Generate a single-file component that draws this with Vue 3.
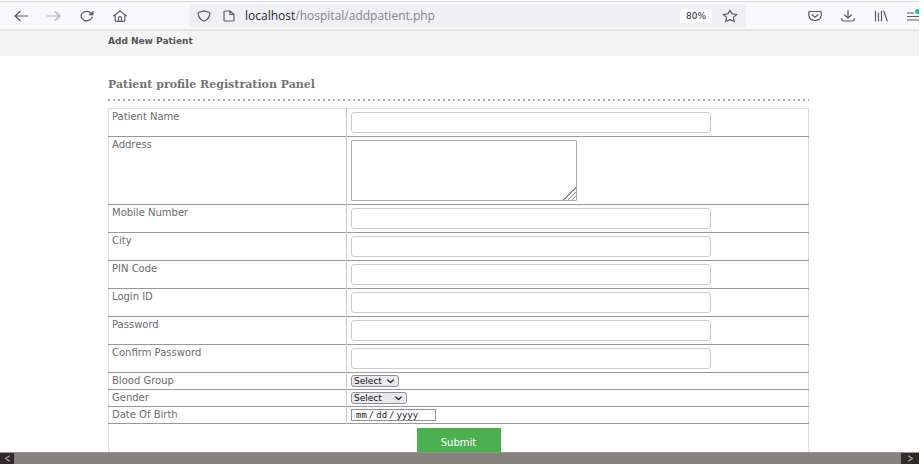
<script setup>
import { ref } from 'vue'

const rows = [
  { id: 'name', label: 'Patient Name', type: 'text' },
  { id: 'address', label: 'Address', type: 'area' },
  { id: 'mobile', label: 'Mobile Number', type: 'text' },
  { id: 'city', label: 'City', type: 'text' },
  { id: 'pin', label: 'PIN Code', type: 'text' },
  { id: 'login', label: 'Login ID', type: 'text' },
  { id: 'password', label: 'Password', type: 'password' },
  { id: 'confirm', label: 'Confirm Password', type: 'password' },
  { id: 'blood', label: 'Blood Group', type: 'select' },
  { id: 'gender', label: 'Gender', type: 'select' },
  { id: 'dob', label: 'Date Of Birth', type: 'date' }
]
const values = ref({})
</script>

<template>
  <div class="window">
    <header class="toolbar">
      <nav class="nav">
        <button class="tool" aria-label="Back">
          <svg width="14" height="12" viewBox="0 0 14 12"><path d="M13.5 6H1M6 1.5L1 6l5 4.5" /></svg>
        </button>
        <button class="tool dim" aria-label="Forward" disabled>
          <svg width="14" height="12" viewBox="0 0 14 12"><path d="M.5 6H13M8 1.500L13 6l-5 4.500" /></svg>
        </button>
        <button class="tool" aria-label="Reload">
          <svg width="14" height="12" viewBox="0 0 14 12"><path d="M11.200 3.300A5.600 4.700 0 1 0 12.200 7" /><path class="solid" d="M13.500.6v4.600H8.300z" /></svg>
        </button>
        <button class="tool" aria-label="Home">
          <svg width="14" height="12" viewBox="0 0 14 12"><path d="M.6 6L7 .9 13.400 6M2.200 5v5.300q0 1 1.100 1h7.400q1.100 0 1.100-1V5M5.500 11V8q0-1.300 1.500-1.300T8.500 8v3" /></svg>
        </button>
      </nav>
      <div class="address">
        <svg width="14" height="12" viewBox="0 0 14 12"><path d="M7 .8L12.800 2.500Q13.200 8.800 7 11.300.8 8.800 1.200 2.500z" /></svg>
        <svg width="12" height="12" viewBox="0 0 12 12"><path d="M2 1h5l4 3.500v5.700q0 .8-1 .8H2q-1 0-1-.8V1.800Q1 1 2 1zM7 1v3.500h4" /></svg>
        <span class="url"><b>localhost</b>/hospital/addpatient.php</span>
        <button class="zoom">80%</button>
        <button class="tool" aria-label="Bookmark this page">
          <svg width="16" height="14" viewBox="0 0 16 14"><path d="M8 1.200l2.100 3.700 4.700.6-3.400 2.900.9 4.100L8 10.600l-4.300 1.900.9-4.100L1.200 5.500l4.700-.6z" /></svg>
        </button>
      </div>
      <div class="actions">
        <button class="tool" aria-label="Save to Pocket">
          <svg width="14" height="12" viewBox="0 0 14 12"><path d="M1.800 1.500h10.400q1 0 1 1V5.300Q12.500 10.300 7 10.500 1.500 10.300.8 5.300V2.500q0-1 1-1zM4 4.800L7 7.200l3-2.400" /></svg>
        </button>
        <button class="tool" aria-label="Downloads">
          <svg width="14" height="12" viewBox="0 0 14 12"><path d="M7 .5v7.500M3.500 5L7 8l3.500-3M.8 8.500v1q0 1.500 1.700 1.500h9q1.700 0 1.700-1.500v-1" /></svg>
        </button>
        <button class="tool" aria-label="Library">
          <svg width="14" height="12" viewBox="0 0 14 12"><path d="M1.500 1v10M4.500 3v8M7.500 1v10M9.800 1l3.400 10" /></svg>
        </button>
        <button class="tool" aria-label="Menu">
          <svg width="12" height="14" viewBox="0 0 12 14"><path d="M.5 4h6M.5 7.500H11.500M.5 11H11.500" /><circle cx="10.500" cy="2.500" r="2.500" fill="#18c5a0" stroke="none" /></svg>
        </button>
      </div>
    </header>

    <main class="page">
      <div class="crumb">Add New Patient</div>
      <form class="panel" @submit.prevent>
        <h1>Patient profile Registration Panel</h1>
        <table>
          <tbody>
            <tr v-for="r in rows" :key="r.id" :class="r.type">
              <th scope="row"><label :for="r.id">{{ r.label }}</label></th>
              <td>
                <textarea v-if="r.type === 'area'" :id="r.id" v-model="values[r.id]"></textarea>
                <span v-else-if="r.type === 'select'" class="picker">
                  <select :id="r.id" :class="r.id"><option>Select</option></select>
                  <svg width="7" height="5" viewBox="0 0 7 5"><path d="M.7 1l2.800 2.500L6.300 1" /></svg>
                </span>
                <input v-else :id="r.id" v-model="values[r.id]" :type="r.type" />
              </td>
            </tr>
            <tr>
              <td class="foot" colspan="2"><button class="submit" type="submit">Submit</button></td>
            </tr>
          </tbody>
        </table>
      </form>
    </main>

    <div class="scrollbar">
      <button aria-label="Scroll left"><svg width="7" height="7" viewBox="0 0 7 7"><path d="M5.500 1L1.500 3.500l4 2.500" /></svg></button>
      <button class="right" aria-label="Scroll right"><svg width="7" height="7" viewBox="0 0 7 7"><path d="M1.500 1l4 2.500-4 2.500" /></svg></button>
    </div>
  </div>
</template>

<style>
body {
  background: #fff;
}
</style>

<style scoped>
* {
  box-sizing: border-box;
}
.window {
  display: flex;
  flex-direction: column;
  height: 100vh;
  padding: 1px 5px 1px 0;
  overflow: hidden;
  font-family: "DejaVu Sans", sans-serif;
}
button {
  padding: 0;
  border: 0;
  background: none;
  font-family: inherit;
}
svg {
  display: block;
  flex: none;
  fill: none;
  stroke: #5b5b66;
  stroke-width: 1.2;
  stroke-linecap: round;
  stroke-linejoin: round;
}
.solid {
  fill: #5b5b66;
  stroke: none;
}
.toolbar {
  display: flex;
  flex: none;
  align-items: center;
  height: 30px;
  padding-left: 14px;
  border-top: 1px solid #d9d9d9;
  border-bottom: 2px solid #e5e5df;
  background: #f9f9fb;
}
.nav,
.actions {
  display: flex;
  align-items: center;
  gap: 19px;
}
.dim {
  opacity: 0.45;
}
.address {
  display: flex;
  flex: 1;
  align-items: center;
  height: 23px;
  margin: 0 62px;
  padding: 0 8px;
  border-radius: 3px;
  background: #f0f0f4;
}
.address > svg + svg {
  margin: 0 10px 0 12px;
}
.url {
  flex: 1;
  color: #85858d;
  font: 12px/16px "Open Sans", sans-serif;
}
.url b {
  color: #26262e;
  font-weight: 400;
}
.zoom {
  width: 32px;
  height: 14px;
  margin-right: 10px;
  border-radius: 2px;
  background: #fff;
  color: #26262e;
  font: 9px/14px "DejaVu Sans", sans-serif;
}
.page {
  flex: 1;
  min-height: 0;
  overflow: hidden;
}
.crumb {
  height: 25px;
  padding: 4px 108px;
  background: #f4f4f4;
  color: #555;
  font-size: 9px;
  font-weight: 700;
  line-height: 12px;
}
.panel {
  margin: 21px 110px 0 108px;
}
h1 {
  margin: 0 0 7px;
  padding-bottom: 8px;
  background: repeating-linear-gradient(to right, #aaa 0 2px, transparent 2px 5px) bottom / 100% 2px no-repeat;
  color: #737373;
  font: 700 11px/16px "DejaVu Serif", serif;
}
table {
  width: 100%;
  border: 1px solid #ddd;
  border-collapse: collapse;
  table-layout: fixed;
}
tr {
  height: 28px;
}
.area {
  height: 68px;
}
.select,
.date {
  height: 17px;
}
th,
td {
  padding: 3px 4px 0;
  border-top: 1px solid #999;
  vertical-align: top;
}
tr:first-child > * {
  border-top-color: #ddd;
}
th {
  width: 34%;
  padding-left: 3px;
  border-right: 1px solid #ccc;
  color: #6b6b6b;
  font-size: 10px;
  font-weight: 400;
  line-height: 10px;
  text-align: left;
}
label,
input,
textarea {
  display: block;
}
input,
textarea {
  width: 100%;
  max-width: 360px;
  height: 21px;
  margin: 0;
  padding: 0 4px;
  border: 1px solid #ccc;
  border-radius: 3px;
  background: #fff;
}
textarea {
  max-width: 226px;
  height: 61px;
  border-color: #aaaab4;
  border-radius: 1px;
}
textarea::-webkit-resizer {
  background:
    linear-gradient(to bottom right, #fff 55%, transparent 55%),
    repeating-linear-gradient(to bottom right, #888 0 1px, #fff 1px 3px);
}
.select td,
.date td {
  padding-top: 2px;
}
.picker {
  display: flex;
  align-items: center;
}
.picker svg {
  margin-left: -12px;
  pointer-events: none;
  stroke: #222;
}
select {
  width: 48px;
  height: 12px;
  margin: 0;
  padding: 0 0 0 2px;
  border: 1px solid #8f8f9d;
  border-radius: 3px;
  appearance: none;
  background: #e9e9ed;
  color: #111;
  font: 9px/10px "DejaVu Sans", sans-serif;
}
.gender {
  width: 56px;
}
input[type="date"] {
  max-width: 85px;
  height: 12px;
  padding: 0 3px;
  border-color: #8f8f9d;
  border-radius: 0;
  color: #222;
  font: 9px/10px "DejaVu Sans Mono", monospace;
}
input::-webkit-calendar-picker-indicator {
  display: none;
}
input::-webkit-datetime-edit,
input::-webkit-datetime-edit-fields-wrapper {
  padding: 0;
}
input::-webkit-datetime-edit-text {
  padding: 0 1px;
}
.foot {
  padding-top: 4px;
  text-align: center;
}
.submit {
  width: 84px;
  height: 28px;
  background: #4caf50;
  color: #fff;
  font-size: 10px;
}
.scrollbar {
  display: flex;
  flex: none;
  justify-content: space-between;
  height: 12px;
  border-top: 1px solid #999690;
  background: #86827c;
}
.scrollbar button {
  display: grid;
  place-items: center;
  width: 14px;
  background: #302b28;
}
.scrollbar .right {
  width: 18px;
}
.scrollbar svg {
  stroke: #aaa6a2;
}
</style>
